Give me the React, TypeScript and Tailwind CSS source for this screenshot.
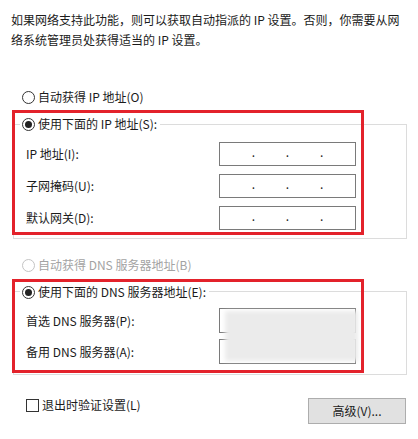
import React from 'react';

const font = "font-['Noto_Sans_CJK_SC','Liberation_Sans',sans-serif]";

function Radio({ checked, disabled }: { checked?: boolean; disabled?: boolean }) {
    return (
        <span
            className={
                'w-[13px] h-[13px] rounded-full border flex items-center justify-center shrink-0 bg-white ' +
                (disabled ? 'border-[#c4c4c4]' : 'border-[#333333]')
            }
        >
            {checked && <span className="w-[7px] h-[7px] rounded-full bg-[#222222]" />}
        </span>
    );
}

function IpBox() {
    return (
        <div className="w-[137px] h-[24px] border border-[#7a7a7a] bg-white flex items-center px-[1px]">
            <span className="flex-1" />
            <span className="text-[12px] leading-none mb-[5px]">.</span>
            <span className="flex-1" />
            <span className="text-[12px] leading-none mb-[5px]">.</span>
            <span className="flex-1" />
            <span className="text-[12px] leading-none mb-[5px]">.</span>
            <span className="flex-1" />
        </div>
    );
}

function FieldRow({ label, children }: { label: string; children: React.ReactNode }) {
    return (
        <div className="flex items-center pl-[11px]">
            <span className="w-[193px] leading-[20px]">{label}</span>
            {children}
        </div>
    );
}

export default function App() {
    return (
        <div className={`w-[418px] h-[439px] bg-white text-[12px] text-[#1b1b1b] overflow-hidden ${font}`}>
            {/* Intro */}
            <p className="pl-[11px] pt-[10px] leading-[20px]">
                如果网络支持此功能，则可以获取自动指派的 IP 设置。否则，你需要从网
                <br />
                络系统管理员处获得适当的 IP 设置。
            </p>

            {/* Auto IP */}
            <div className="mt-[37px] ml-[22px] flex items-center gap-[3px] h-[20px]">
                <Radio />
                <span>自动获得 IP 地址(O)</span>
            </div>

            {/* Manual IP group */}
            <div className="relative ml-[12px] mt-[3px] w-[395px] h-[129px]">
                <div className="absolute top-[14px] left-[1px] right-0 bottom-0 border border-[#dcdcdc]" />
                <div className="relative w-[352px] h-[125px] border-[3px] border-[#e3222b] flex flex-col">
                    <div className="self-start ml-[5px] mt-[1px] h-[20px] pl-[2px] pr-[3px] bg-white flex items-center gap-[3px]">
                        <Radio checked />
                        <span>使用下面的 IP 地址(S):</span>
                    </div>
                    <div className="mt-[8px] flex flex-col gap-[8px]">
                        <FieldRow label="IP 地址(I):">
                            <IpBox />
                        </FieldRow>
                        <FieldRow label="子网掩码(U):">
                            <IpBox />
                        </FieldRow>
                        <FieldRow label="默认网关(D):">
                            <IpBox />
                        </FieldRow>
                    </div>
                </div>
            </div>

            {/* Auto DNS (disabled) */}
            <div className="mt-[16px] ml-[22px] flex items-center gap-[3px] h-[20px] text-[#a3a3a3]">
                <Radio disabled />
                <span>自动获得 DNS 服务器地址(B)</span>
            </div>

            {/* Manual DNS group */}
            <div className="relative ml-[12px] mt-[4px] w-[395px] h-[96px]">
                <div className="absolute top-[12px] left-[1px] right-0 bottom-0 border border-[#dcdcdc]" />
                <div className="relative w-[352px] h-[94px] border-[3px] border-[#e3222b] flex flex-col">
                    <div className="self-start ml-[5px] h-[20px] pl-[2px] pr-[3px] bg-white flex items-center gap-[3px]">
                        <Radio checked />
                        <span>使用下面的 DNS 服务器地址(E):</span>
                    </div>
                    <div className="relative mt-[6px] flex flex-col gap-[6px]">
                        <FieldRow label="首选 DNS 服务器(P):">
                            <div className="w-[137px] h-[25px] border border-[#7a7a7a] bg-white" />
                        </FieldRow>
                        <FieldRow label="备用 DNS 服务器(A):">
                            <div className="w-[137px] h-[25px] border border-[#7a7a7a] bg-white" />
                        </FieldRow>
                        {/* blurred mask over the addresses */}
                        <div className="absolute left-[210px] top-[3px] w-[133px] h-[50px] bg-[#ebebeb] blur-[2px]" />
                    </div>
                </div>
            </div>

            {/* Footer */}
            <div className="mt-[22px] flex items-start">
                <label className="ml-[26px] h-[16px] flex items-center gap-[3px]">
                    <span className="w-[13px] h-[13px] border border-[#333333] bg-white" />
                    <span>退出时验证设置(L)</span>
                </label>
                <button className="ml-auto mr-[12px] mt-[1px] w-[98px] h-[26px] bg-[#e1e1e1] border border-[#adadad] text-[12px] text-[#1b1b1b]">
                    高级(V)...
                </button>
            </div>
        </div>
    );
}
